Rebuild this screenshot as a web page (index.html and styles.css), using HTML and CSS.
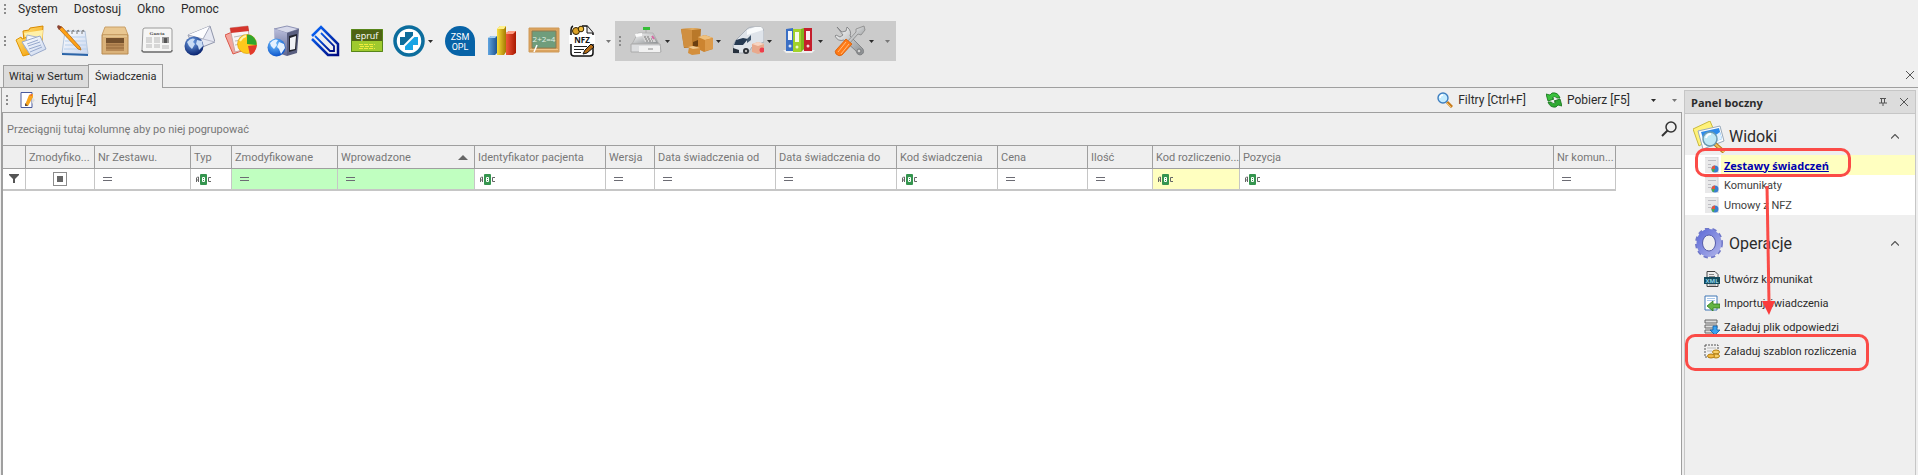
FILE: index.html
```html
<!DOCTYPE html>
<html lang="pl">
<head>
  <meta charset="UTF-8" />
  <meta name="viewport" content="width=device-width, initial-scale=1" />
  <title>Sertum - Świadczenia</title>
  <link rel="stylesheet" href="styles.css">
</head>
<body>
  <svg width="0" height="0" class="defs" aria-hidden="true">
    <defs>
      <linearGradient id="gOrange" x1="0" y1="0" x2="1" y2="1"><stop offset="0" stop-color="#ffe27a"/><stop offset="1" stop-color="#f39a00"/></linearGradient>
      <linearGradient id="gPaper" x1="0" y1="0" x2="1" y2="1"><stop offset="0" stop-color="#ffffff"/><stop offset="1" stop-color="#c9d6ee"/></linearGradient>
      <linearGradient id="gClip" x1="0" y1="0" x2="1" y2="1"><stop offset="0" stop-color="#0a6cff"/><stop offset="1" stop-color="#000a80"/></linearGradient>
      <linearGradient id="gServer" x1="0" y1="0" x2="0" y2="1"><stop offset="0" stop-color="#b9bddb"/><stop offset="1" stop-color="#5d6590"/></linearGradient>
      <radialGradient id="gGlobe" cx=".4" cy=".3" r=".7"><stop offset="0" stop-color="#6da0e6"/><stop offset="1" stop-color="#0a2470"/></radialGradient>
      <radialGradient id="gGlobe2" cx=".4" cy=".3" r=".7"><stop offset="0" stop-color="#74c4ff"/><stop offset="1" stop-color="#0c55cc"/></radialGradient>
      <linearGradient id="gBlueBar"><stop offset="0" stop-color="#5fa4e0"/><stop offset="1" stop-color="#1f5490"/></linearGradient>
      <linearGradient id="gYellowBar"><stop offset="0" stop-color="#f8dc3a"/><stop offset="1" stop-color="#a37a00"/></linearGradient>
      <linearGradient id="gRedBar"><stop offset="0" stop-color="#f0583a"/><stop offset="1" stop-color="#a81800"/></linearGradient>
      <linearGradient id="gSteel" x1="0" y1="0" x2="1" y2="1"><stop offset="0" stop-color="#ffffff"/><stop offset="1" stop-color="#85898c"/></linearGradient>
      <linearGradient id="gGear" x1="0" y1="0" x2="1" y2="1"><stop offset="0" stop-color="#6470d8"/><stop offset="1" stop-color="#a9aee8"/></linearGradient>
      <symbol id="abc" viewBox="0 0 16 12">
        <rect x="4" y="1" width="7" height="11" rx="1" fill="#35954f"/>
        <path d="M.5 9V5l1-1h1v5M.5 7h2" fill="none" stroke="#666"/>
        <path d="M6.500 4.500h2v4h-2zM6.500 6.500h2" fill="none" stroke="#fff"/>
        <path d="M15 4.500h-2.500v4H15" fill="none" stroke="#666"/>
      </symbol>
      <symbol id="eq" viewBox="0 0 10 6"><path d="M0 1.500h9M0 4.500h9" stroke="#6c6c74"/></symbol>
      <symbol id="report" viewBox="0 0 16 16">
        <path d="M1 0h13v16H1z" fill="#e9e9ea"/><path d="M1 0h13v16" fill="none" stroke="#d2d2d4"/>
        <path d="M4 3.500h8M4 7.500h3M4 10.500h3" stroke="#bdbdc2"/>
        <circle cx="11" cy="12" r="3.500" fill="#3a7fd0"/><path d="M11 12V8.500A3.500 3.500 0 0 0 7.500 12z" fill="#e2553a"/><path d="M11 12h-3.500a3.500 3.500 0 0 0 2 3.200z" fill="#4cab4c"/>
      </symbol>
      <symbol id="drop" viewBox="0 0 5 3"><path d="M0 0h5L2.500 3z" fill="currentColor"/></symbol>
    </defs>
  </svg>

  <nav class="menu">
    <span class="grip"></span>
    <button>System</button>
    <button>Dostosuj</button>
    <button>Okno</button>
    <button>Pomoc</button>
  </nav>

  <div class="toolbars">
    <div class="toolbar">
      <span class="grip"></span>
      <button class="tool" aria-label="Foldery">
        <svg viewBox="0 0 32 32">
          <path d="M8 6l6-1 1-2 13-2-1 19-17 5z" fill="url(#gOrange)" stroke="#d98a00"/>
          <path d="M9 8l19-3-1 15-12 4z" fill="#fff0a8"/>
          <path d="M1 15l5-3 1 2 8-3 4 17-11 3z" fill="url(#gOrange)" stroke="#e09400"/>
          <path d="M12 10l14 3-2 12-14-2z" fill="#f4f6fb" stroke="#a8b4cc"/>
          <path d="M7 17l18-6 6 13-15 7z" fill="url(#gPaper)" stroke="#9aaacb"/>
          <path d="M12 19l11-4M13 21l12-4M14 24l12-4M15 27l12-5" stroke="#97a9cd"/>
        </svg>
      </button>
      <button class="tool" aria-label="Notatnik">
        <svg viewBox="0 0 32 32">
          <path d="M8 6h20l3 23-26-1z" fill="url(#gPaper)" stroke="#b4c6de"/>
          <path d="M5 28l26 1v2L5 30z" fill="#2b64a8"/>
          <path d="M9 12h19M8 16h21M8 20h22M7 24h23" stroke="#b9d0ec"/>
          <path d="M10 9V6q2-2 2 1M15 9V6q2-2 2 1M20 9V6q2-2 2 1M25 9V6q2-2 2 1" fill="none" stroke="#777"/>
          <path d="M2 1l3 1 18 20 1 3-3-1L2 4z" fill="#ffa216" stroke="#b86a10" stroke-width=".8"/>
          <path d="M1 0l4 2-3 3-2-3z" fill="#8b4535"/>
        </svg>
      </button>
      <button class="tool" aria-label="Magazyn">
        <svg viewBox="0 0 32 32">
          <path d="M6 2h20l3 8H3z" fill="#e9c791" stroke="#c9a068"/>
          <path d="M3 10h26v19H3z" fill="#dab27a" stroke="#b98b50"/>
          <path d="M7 13h18v13H7z" fill="#74502c"/><path d="M7 18h18v8H7z" fill="#b88a56"/>
          <path d="M7 20h18M7 23h18" stroke="#94693a"/><path d="M4 11h24" stroke="#f1d8a8"/>
        </svg>
      </button>
      <button class="tool" aria-label="Aktualności">
        <svg viewBox="0 0 32 32">
          <path d="M2 4q1-1 2-1h25q2 0 2 2v20q0 2-2 2H3q-2 0-2-2z" fill="#f6f6f5" stroke="#9a9a9a"/>
          <path d="M1 25q0 2 2 2h26q2 0 2-2" fill="none" stroke="#777" stroke-width="1.500"/>
          <text x="16" y="10" text-anchor="middle" font-family="Liberation Serif, serif" font-weight="bold" font-size="5" fill="#444">Gazeta</text>
          <path d="M21 12h7v6h-7z" fill="#999"/><path d="M23 13h3v5h-3z" fill="#555"/>
          <path d="M5 13h6M5 15h6M5 17h6M5 20h6M5 22h6M13 13h6M13 15h6M13 17h6M13 20h6M13 22h6M21 21h7M21 23h7" stroke="#b6b6b6"/>
        </svg>
      </button>
      <button class="tool" aria-label="Poczta">
        <svg viewBox="0 0 32 32">
          <path d="M5 10l22-9 5 16-20 8z" fill="#e6e8f2" stroke="#8f95aa"/>
          <path d="M5 10l15 4 7-13" fill="#fdfdff" stroke="#a4a9bc"/><path d="M20 14l12 3" stroke="#b7bacb"/>
          <circle cx="11" cy="21" r="9.500" fill="url(#gGlobe)"/>
          <path d="M4 17q4-5 8-3l-2 3 2 2-3 5-3-3zM14 15l5 1 1 5-4 4-1-4-2-2z" fill="#c9dcf5"/>
        </svg>
      </button>
      <button class="tool" aria-label="Raporty">
        <svg viewBox="0 0 32 32">
          <path d="M0 10l14-6 8 20-14 5z" fill="#f4a69d" stroke="#d9574a"/>
          <path d="M5 3l18-2 2 22-15 4z" fill="#f7f4f4" stroke="#c9a5a2"/>
          <path d="M5 3l18-2 1 5L6 8z" fill="#d5352c"/><path d="M9 12l11-2M10 16l8-1M10 20l6-1" stroke="#b9b9b9"/>
          <circle cx="22" cy="19" r="9.500" fill="#ffc91c" stroke="#d79a00" stroke-width=".6"/>
          <path d="M22 19V9.500a9.500 9.500 0 0 1 9.500 10.500z" fill="#31a52c"/>
          <path d="M23 21l9-1q-1 8-7 10z" fill="#e23a2b"/><path d="M15 16q2-4 6-5" stroke="#fff3a6" stroke-width="2" fill="none"/>
        </svg>
      </button>
      <button class="tool" aria-label="Serwer">
        <svg viewBox="0 0 32 32">
          <path d="M7 4l13-3 12 3-12 4z" fill="#d7d9ea" stroke="#8d92b4"/>
          <path d="M7 4l13 4v23L8 27z" fill="url(#gServer)"/>
          <path d="M20 8l12-4-2 24-10 3z" fill="#5a5f80"/><path d="M22 11l8-2-1 16-7 2z" fill="#20222c"/><path d="M23 13l6-2-1 13-5 1z" fill="#f1f2f6"/>
          <circle cx="9.500" cy="22.500" r="9" fill="url(#gGlobe2)"/>
          <path d="M3 18q4-5 8-3l-2 3 1 2-3 4-3-3zM12 17l5 2 1 4-4 6-2-5-2-2z" fill="#e4f1ff"/>
        </svg>
      </button>
      <button class="tool" aria-label="Załączniki">
        <svg viewBox="0 0 32 32">
          <path d="M3 11l9-9 17 17v11H19L3 14" fill="none" stroke="url(#gClip)" stroke-width="2.500"/>
          <path d="M6 11l15 15h4v-5L12 8" fill="none" stroke="url(#gClip)" stroke-width="1.800"/>
        </svg>
      </button>
      <button class="tool" aria-label="epruf">
        <svg viewBox="0 0 32 32">
          <path d="M0 4h32v23H0z" fill="#9fca2e"/><path d="M1 5h30v11H1z" fill="#4f6313"/>
          <path d="M.5 4.500h31v22H.5z" fill="none" stroke="#57851a"/>
          <text x="16" y="14" text-anchor="middle" font-family="Open Sans, sans-serif" font-size="9" fill="#fff">epruf</text>
          <path d="M8 19.500h16M9 21.500h13M8 23.500h16" stroke="#f2ec3c" stroke-dasharray="4 1"/>
        </svg>
      </button>
      <button class="tool tool-drop" aria-label="Apteka">
        <svg viewBox="0 0 32 32">
          <circle cx="16" cy="16" r="14" fill="#fff" stroke="#0c6d9d" stroke-width="3.500"/>
          <path d="M12 7h8v5h5v8h-5v5h-8v-5H7v-8h5z" fill="#0e6c9a"/>
          <path d="M25 12v8h-5v5h-8v-4l9-9z" fill="#18a4e4"/><path d="M10 22L22 10" stroke="#fff" stroke-width="2"/>
        </svg>
        <svg class="drop"><use href="#drop"/></svg>
      </button>
      <button class="tool" aria-label="ZSM OPL">
        <svg viewBox="0 0 32 32">
          <path d="M16 1a15 15 0 0 1 15 15v15H16a15 15 0 0 1 0-30z" fill="#0763a7"/>
          <text x="16" y="15" text-anchor="middle" font-family="Roboto, sans-serif" font-size="9" fill="#fff">ZSM</text>
          <text x="16" y="25" text-anchor="middle" font-family="Roboto, sans-serif" font-size="9" fill="#fff">OPL</text>
        </svg>
      </button>
      <button class="tool" aria-label="Statystyki">
        <svg viewBox="0 0 32 32">
          <path d="M2 13l3-2h6v17l-2 2H2z" fill="url(#gBlueBar)"/><path d="M2 13l3-2h6l-2 2z" fill="#a4cdf0"/>
          <path d="M20 8l3-2h7v22l-3 2h-7z" fill="url(#gRedBar)"/><path d="M20 8l3-2h7l-3 3h-7z" fill="#ff9a80"/>
          <path d="M11 4l3-3h6v26l-2 3h-7z" fill="url(#gYellowBar)"/><path d="M11 4l3-3h6l-2 3z" fill="#fff08a"/>
        </svg>
      </button>
      <button class="tool" aria-label="Szkolenia">
        <svg viewBox="0 0 32 32">
          <path d="M1 3h30v24H1z" fill="#dba35e" stroke="#cf9a58"/><path d="M4 6h24v17H4z" fill="#6f9d7c" stroke="#8a7a51"/>
          <text x="16" y="17" text-anchor="middle" font-family="Open Sans, sans-serif" font-size="8" fill="#e2efe4">2+2=4</text>
          <path d="M2 24.500h28" stroke="#efc48a"/><path d="M6 27l3-7" stroke="#fff" stroke-width="1.500"/>
        </svg>
      </button>
      <button class="tool tool-narrow" aria-label="NFZ">
        <svg viewBox="0 0 32 32">
          <path d="M7 1q-2 1-2 4v23q0 3 3 3h16q3 0 3-3V8l-6-7h-5" fill="#fff" stroke="#111" stroke-width="1.500"/>
          <path d="M21 1v7h6" fill="#eee" stroke="#111"/>
          <path d="M3 10h26v9H3z" fill="#fff"/>
          <text x="16" y="18" text-anchor="middle" font-family="Open Sans, sans-serif" font-weight="bold" font-size="8" fill="#111">NFZ</text>
          <path d="M8 21.500h13M8 24.500h10M8 27.500h7" stroke="#222"/>
          <path d="M25 19l3 3-7 6-4 1 2-4z" fill="#b56d17" stroke="#111"/>
          <circle cx="10" cy="6" r="3.500" fill="#dca126" stroke="#332200"/><circle cx="15" cy="4" r="2.800" fill="#f0bd3b" stroke="#332200"/>
        </svg>
      </button>
      <button class="tool-more" aria-label="Więcej"><svg class="drop"><use href="#drop"/></svg></button>
    </div>

    <div class="toolbar toolbar-dark">
      <span class="grip"></span>
      <button class="tool tool-drop" aria-label="Kasa">
        <svg viewBox="0 0 32 32">
          <path d="M13 2h7v3h-7z" fill="#35bd37"/><path d="M16 5v5" stroke="#aaa"/>
          <path d="M8 8h15l6 11H2z" fill="url(#gSteel)" stroke="#b2b2b2"/><path d="M5 9l7-1v3l-6 1z" fill="#fafafa"/>
          <path d="M12 11l10-1 4 7H15z" fill="#d6d6d6"/><path d="M14 12h6M15 14h7M16 16h7" stroke="#777" stroke-dasharray="2 1"/><path d="M22 11l2 3" stroke="#d76aa4" stroke-width="2"/>
          <path d="M1 19h29l1 8H1z" fill="#dcdddf" stroke="#aaa"/><path d="M9 21h21v6H9z" fill="#f1f1f1"/><path d="M18 24h5" stroke="#888"/>
        </svg>
        <svg class="drop"><use href="#drop"/></svg>
      </button>
      <button class="tool tool-drop" aria-label="Paczki">
        <svg viewBox="0 0 32 32">
          <path d="M0 4l12-1 8 1-1 18-16 1z" fill="#b97829"/><path d="M0 4l11 1 9-1-8-1z" fill="#e4af66"/><path d="M0 4l11 1v18l-8-1z" fill="#d08f40"/><path d="M12 17l5-2v6l-5 1z" fill="#6b3f10"/>
          <path d="M17 12l7-2 8 3v11l-9 3-6-3z" fill="#cc8430"/><path d="M17 12l7-2 8 3-8 2z" fill="#efc17e"/><path d="M24 15l8-2v11l-8 2z" fill="#dc9a4a"/>
          <path d="M8 22l3-1 8 2v6l-8 1-4-2z" fill="#d48f3c"/><path d="M7 22l5-1 7 2-7 1z" fill="#f0c88d"/>
        </svg>
        <svg class="drop"><use href="#drop"/></svg>
      </button>
      <button class="tool tool-drop" aria-label="Dostawy">
        <svg viewBox="0 0 32 32">
          <path d="M1 20l3-5L15 4q2-2 5-2h8q3 0 4 4v11l-12 5-4 6H2z" fill="#dfe4ea" stroke="#aab0b8"/>
          <path d="M15 5l8-3h6q2 1 2 3l-16 5z" fill="#f9fbfc"/>
          <path d="M4 15l7-2 5 1-5 6H2z" fill="#263a52"/><path d="M15 14l4-4v5l-4 3z" fill="#40566d"/>
          <path d="M1 23l6 2v3H1z" fill="#27313d"/><circle cx="14" cy="26" r="3" fill="#2a2e34"/><circle cx="14" cy="26" r="1.200" fill="#bbb"/>
          <path d="M20 19l6-2 6 2v8l-6 2-6-2z" fill="#e8a98c"/><path d="M20 19l6-2 6 2-6 2z" fill="#f7d5c2"/>
          <circle cx="30" cy="25" r="2.500" fill="#ee3d4d"/>
        </svg>
        <svg class="drop"><use href="#drop"/></svg>
      </button>
      <button class="tool tool-drop" aria-label="Segregatory">
        <svg viewBox="0 0 32 32">
          <path d="M0 25h32l-3 3H3z" fill="#eee"/>
          <path d="M3 4l7-1v23H3z" fill="#3b6fc4"/><path d="M5 6h4v9H5z" fill="#f3f5fb"/><circle cx="7" cy="21" r="1.500" fill="#dce5f7"/>
          <path d="M21 3h8v23h-8z" fill="#c41e2c"/><path d="M23 6h4v9h-4z" fill="#fbeeee"/><circle cx="25" cy="21" r="1.500" fill="#f6d5d7"/>
          <path d="M10 4l8 0 3-1v21l-3 3h-8z" fill="#7fb51b"/><path d="M10 4h8v23h-8z" fill="#a2d22a"/><path d="M12 7h4v10h-4z" fill="#f7fbe9"/><circle cx="14" cy="22" r="1.500" fill="#eef8cf"/>
        </svg>
        <svg class="drop"><use href="#drop"/></svg>
      </button>
      <button class="tool tool-drop" aria-label="Narzędzia">
        <svg viewBox="0 0 32 32">
          <path d="M3 2l5 5 4-1 1-4q5 4 3 9l13 13q2 5-3 6-3 0-4-4L10 15q-6 2-9-4l1-1 4 2 3-2z" fill="url(#gSteel)" stroke="#77797b" stroke-width=".8"/>
          <circle cx="25" cy="26" r="2" fill="#d4d4d4" stroke="#77797b"/>
          <path d="M30 1l1 4-4 5-3-1-9 10-2-2 9-10v-3z" fill="url(#gSteel)" stroke="#888" stroke-width=".8"/>
          <path d="M12 14l6 5-10 11q-3 2-6-1-2-3 1-5z" fill="#ff7a16" stroke="#d95a00" stroke-width=".8"/><path d="M12 17L4 27M15 19L7 29" stroke="#ffbd80"/>
        </svg>
        <svg class="drop"><use href="#drop"/></svg>
      </button>
      <button class="tool-more" aria-label="Więcej"><svg class="drop"><use href="#drop"/></svg></button>
    </div>
  </div>

  <div class="tabs">
    <button class="tab">Witaj w Sertum</button>
    <button class="tab tab-active">Świadczenia</button>
    <button class="close" aria-label="Zamknij"><svg viewBox="0 0 8 8"><path d="M0 0l8 8M8 0L0 8" stroke="#555"/></svg></button>
  </div>

  <div class="workspace">
    <main>
      <div class="actions">
        <span class="grip"></span>
        <button class="action">
          <svg viewBox="0 0 16 16"><path d="M1 .5h11v15H1z" fill="#fff" stroke="#4a5a9c"/><path d="M12 5l3 3-3 4z" fill="#ddd"/><path d="M5 13l4-10 4-1v3L8 14H5z" fill="#f9a51c"/><path d="M5 11v3h3z" fill="#5d4c44"/><path d="M9 3l3-1v2z" fill="#e65f3c"/></svg>
          Edytuj [F4]
        </button>
        <span class="spacer"></span>
        <button class="action">
          <svg viewBox="0 0 16 16"><path d="M10 10l5 5" stroke="#c77a1c" stroke-width="3"/><path d="M9 10l5 5" stroke="#f7c565"/><circle cx="6" cy="6" r="5" fill="#c5ecff" stroke="#3f7fc0" stroke-width="1.400"/><path d="M3 6q0-3 3-3" stroke="#fff" stroke-width="1.500" fill="none"/></svg>
          Filtry [Ctrl+F]
        </button>
        <button class="action">
          <svg viewBox="0 0 16 16"><path d="M14 6Q12 0 6 1L4 3 0 2l2 7 6-2-2-1q3-3 5 0z" fill="#39c13c" stroke="#126e18" stroke-width=".8"/><path d="M2 10q2 6 8 5l2-2 4 1-2-7-6 2 2 1q-3 3-5 0z" fill="#2faa32" stroke="#126e18" stroke-width=".8"/></svg>
          Pobierz [F5]
        </button>
        <button class="action-drop action-menu" aria-label="Opcje pobierania"><svg class="drop"><use href="#drop"/></svg></button>
        <button class="action-drop muted" aria-label="Więcej"><svg class="drop"><use href="#drop"/></svg></button>
      </div>

      <div class="grid">
        <div class="group-panel">
          <span>Przeciągnij tutaj kolumnę aby po niej pogrupować</span>
          <button class="search" aria-label="Szukaj"><svg viewBox="0 0 16 16"><circle cx="10" cy="6" r="5" fill="none" stroke="#333" stroke-width="1.500"/><path d="M6.500 9.500L1 15" stroke="#333" stroke-width="2"/></svg></button>
        </div>
        <table>
          <colgroup>
            <col class="c-mark"><col class="c-mod"><col class="c-nr"><col class="c-typ"><col class="c-modified"><col class="c-added"><col class="c-patient"><col class="c-version"><col class="c-from"><col class="c-to"><col class="c-code"><col class="c-price"><col class="c-qty"><col class="c-settle"><col class="c-item"><col class="c-msg"><col>
          </colgroup>
          <thead>
            <tr>
              <th></th>
              <th>Zmodyfiko...</th>
              <th>Nr Zestawu.</th>
              <th>Typ</th>
              <th>Zmodyfikowane</th>
              <th><span class="sorted">Wprowadzone <svg viewBox="0 0 10 5"><path d="M0 5l5-5 5 5z" fill="#666"/></svg></span></th>
              <th>Identyfikator pacjenta</th>
              <th>Wersja</th>
              <th>Data świadczenia od</th>
              <th>Data świadczenia do</th>
              <th>Kod świadczenia</th>
              <th>Cena</th>
              <th>Ilość</th>
              <th>Kod rozliczenio...</th>
              <th>Pozycja</th>
              <th>Nr komun...</th>
              <th></th>
            </tr>
          </thead>
          <tbody>
            <tr>
              <td class="mark"><svg class="funnel" viewBox="0 0 10 10"><path d="M0 0h10v1L6 5v4H4V5L0 1z" fill="#555"/></svg></td>
              <td class="check"><input type="checkbox" aria-label="Zmodyfikowany"></td>
              <td><svg class="eq"><use href="#eq"/></svg></td>
              <td><svg class="abc"><use href="#abc"/></svg></td>
              <td class="green"><svg class="eq"><use href="#eq"/></svg></td>
              <td class="green"><svg class="eq"><use href="#eq"/></svg></td>
              <td><svg class="abc"><use href="#abc"/></svg></td>
              <td><svg class="eq"><use href="#eq"/></svg></td>
              <td><svg class="eq"><use href="#eq"/></svg></td>
              <td><svg class="eq"><use href="#eq"/></svg></td>
              <td><svg class="abc"><use href="#abc"/></svg></td>
              <td><svg class="eq"><use href="#eq"/></svg></td>
              <td><svg class="eq"><use href="#eq"/></svg></td>
              <td class="yellow"><svg class="abc"><use href="#abc"/></svg></td>
              <td><svg class="abc"><use href="#abc"/></svg></td>
              <td><svg class="eq"><use href="#eq"/></svg></td>
              <td class="rest"></td>
            </tr>
          </tbody>
        </table>
      </div>
    </main>

    <aside>
      <div class="panel-title">
        <h2>Panel boczny</h2>
        <button aria-label="Przypnij"><svg viewBox="0 0 8 8"><path d="M1 .5h6M2.500 0v5M5.500 0v5M0 5h8M4 5v3" stroke="#555" fill="none"/></svg></button>
        <button aria-label="Zamknij panel"><svg viewBox="0 0 8 8"><path d="M0 0l8 8M8 0L0 8" stroke="#555"/></svg></button>
      </div>

      <section>
        <h3 class="heading-views">
          <svg class="big" viewBox="0 0 32 32">
            <path d="M0 8L17 0l6 14-17 11z" fill="#fff27a" stroke="#c9b93c"/>
            <path d="M5 10l22-5 4 15-21 8z" fill="#fdfdfd" stroke="#9ab"/><path d="M8 11l18-4 3 11-17 6z" fill="#2d8bea"/><path d="M10 17l6-3 4 2 7-5 2 7-16 6z" fill="#dff1ff"/>
            <path d="M22 23l9 8" stroke="#b57513" stroke-width="4"/><path d="M22 23l9 8" stroke="#f0c060" stroke-width="2"/>
            <circle cx="17" cy="18" r="7" fill="#bfe8f5" stroke="#6b9ab0" stroke-width="1.500"/><path d="M13 17q1-4 5-4" stroke="#fff" stroke-width="2" fill="none"/>
          </svg>
          Widoki
          <svg class="chevron" viewBox="0 0 8 5"><path d="M0 4.500l4-4 4 4" fill="none" stroke="#555" stroke-width="1.200"/></svg>
        </h3>
        <ul class="views">
          <li class="current"><svg class="small"><use href="#report"/></svg><a href="#zestawy">Zestawy świadczeń</a></li>
          <li><svg class="small"><use href="#report"/></svg><a href="#komunikaty">Komunikaty</a></li>
          <li><svg class="small"><use href="#report"/></svg><a href="#umowy">Umowy z NFZ</a></li>
        </ul>
      </section>

      <section>
        <h3>
          <svg class="big" viewBox="0 0 32 32">
            <ellipse cx="16" cy="15" rx="12" ry="13.500" fill="none" stroke="#7078c8" stroke-width="4" stroke-dasharray="4 3"/>
            <ellipse cx="16" cy="15" rx="9.500" ry="11" fill="none" stroke="url(#gGear)" stroke-width="6"/>
            <ellipse cx="16" cy="15" rx="6.500" ry="8" fill="none" stroke="#555ba8"/>
          </svg>
          Operacje
          <svg class="chevron" viewBox="0 0 8 5"><path d="M0 4.500l4-4 4 4" fill="none" stroke="#555" stroke-width="1.200"/></svg>
        </h3>
        <ul class="operations">
          <li><svg class="small" viewBox="0 0 16 16"><path d="M3 .5h8l3 3v12H3z" fill="#eee" stroke="#444"/><path d="M5 3.500h5M5 5.500h6M5 14h7" stroke="#888"/><path d="M0 6h16v7H0z" fill="#134a5c"/><text x="8" y="12" text-anchor="middle" font-family="Open Sans, sans-serif" font-weight="bold" font-size="6" fill="#8fd6ea">XML</text></svg><a href="#utworz">Utwórz komunikat</a></li>
          <li><svg class="small" viewBox="0 0 16 16"><path d="M1 1h12v14H1z" fill="#fff" stroke="#3f76b5"/><path d="M3 3.500h8M3 5.500h8" stroke="#a9c8ea"/><path d="M16 9v4H9v3l-6-5 6-5v3z" fill="#64b443" stroke="#2f7a1c" stroke-width=".8"/></svg><a href="#importuj">Importuj świadczenia</a></li>
          <li><svg class="small" viewBox="0 0 16 16"><path d="M1 1h12v3H1zM1 6h12v3H1zM1 11h9v3H1z" fill="#ddd" stroke="#666"/><path d="M9 7h4v4h3l-5 5-5-5h3z" fill="#39a3f0" stroke="#0c5ea9" stroke-width=".8"/></svg><a href="#plik">Załaduj plik odpowiedzi</a></li>
          <li><svg class="small" viewBox="0 0 16 16"><path d="M1 2h13v12H1z" fill="#f1f1f1" stroke="#555" stroke-dasharray="2 1"/><path d="M3 5h9M3 8h5" stroke="#bbb"/><ellipse cx="12" cy="9" rx="3.500" ry="2" fill="#f8cf66" stroke="#b17d12"/><ellipse cx="12" cy="13" rx="3.500" ry="2" fill="#f8cf66" stroke="#b17d12"/><ellipse cx="7" cy="13" rx="3.500" ry="2" fill="#f3b843" stroke="#b17d12"/></svg><a href="#szablon">Załaduj szablon rozliczenia</a></li>
        </ul>
      </section>

      <!-- instruction marks over the panel -->
      <div class="highlight highlight-view"></div>
      <div class="highlight highlight-operation"></div>
      <svg class="arrow" viewBox="0 0 14 130"><path d="M6 0l2 116" stroke="#fb4b47" stroke-width="3"/><path d="M1 115h13l-6 14z" fill="#fb3c3c"/></svg>
    </aside>
  </div>
</body>
</html>
```

FILE: styles.css
```css
* {
  box-sizing: border-box;
}
body {
  margin: 0;
  min-height: 100vh;
  display: flex;
  flex-direction: column;
  background-color: #efefef;
  color: #2b2b2b;
  font-family: Roboto, Tahoma, sans-serif;
  font-size: 11px;
}
.defs {
  position: absolute;
}
button {
  margin: 0;
  padding: 0;
  border: none;
  background: none;
  color: inherit;
  font: inherit;
  cursor: pointer;
}
svg {
  display: block;
  flex: none;
}
.grip {
  width: 2px;
  height: 10px;
  background: repeating-linear-gradient(#8c8c8c 0 2px, transparent 2px 4px);
}
.drop {
  width: 5px;
  height: 3px;
}

/* menu */
.menu {
  display: flex;
  align-items: center;
  gap: 16px;
  height: 18px;
  padding-left: 4px;
  font-size: 12px;
}
.menu .grip {
  margin-right: -4px;
}

/* toolbars */
.toolbars {
  display: flex;
  align-items: center;
  height: 46px;
}
.toolbar {
  display: flex;
  align-items: center;
  height: 40px;
  padding-left: 4px;
}
.toolbar .grip {
  margin-right: 5px;
}
.toolbar-dark {
  padding-right: 2px;
  background-color: #cbcbcb;
}
.tool {
  display: flex;
  align-items: center;
  width: 42px;
  height: 40px;
  padding-left: 4px;
}
.tool > svg:first-child {
  width: 32px;
  height: 32px;
}
.tool-drop {
  width: 51px;
  gap: 3px;
}
.tool-narrow {
  width: 36px;
  padding-left: 0;
}
.tool-more {
  padding: 0 4px;
  color: #777;
}

/* tabs */
.tabs {
  display: flex;
  align-items: flex-end;
  height: 24px;
  padding-left: 3px;
  border-bottom: 1px solid #9f9f9f;
}
.tab {
  height: 22px;
  padding: 0 5px;
  border: 1px solid #9f9f9f;
  border-bottom: none;
  background-color: #dcdcdc;
}
.tab-active {
  height: 24px;
  margin: 0 0 -1px -1px;
  padding: 0 6px;
  background-color: #efefef;
}
.close {
  margin: 0 4px 8px auto;
}
.close svg,
.panel-title svg {
  width: 8px;
  height: 8px;
}

/* workspace */
.workspace {
  flex: 1;
  display: flex;
}
main {
  flex: 1;
  min-width: 0;
  display: flex;
  flex-direction: column;
  margin-left: 1px;
  border-left: 1px solid #9f9f9f;
}
.actions {
  display: flex;
  align-items: center;
  height: 24px;
  padding-left: 4px;
  font-size: 12px;
}
.action {
  display: flex;
  align-items: center;
  gap: 5px;
  margin-left: 12px;
}
.action + .action {
  margin-left: 20px;
}
.action svg {
  width: 16px;
  height: 16px;
}
.spacer {
  flex: 1;
}
.action-drop {
  margin-left: 16px;
}
.action-menu {
  margin-left: 21px;
}
.muted {
  margin-right: 7px;
  color: #777;
}
.grid {
  flex: 1;
  margin-right: 2px;
  border: 1px solid #9f9f9f;
  border-bottom: none;
  background-color: #fff;
  color: #777;
}
.group-panel {
  display: flex;
  align-items: center;
  justify-content: space-between;
  height: 32px;
  padding: 0 4px;
  background-color: #efefef;
}
.search svg {
  width: 16px;
  height: 16px;
}

/* services table */
table {
  width: 100%;
  table-layout: fixed;
  border-collapse: separate;
  border-spacing: 0;
}
th {
  height: 24px;
  padding: 0 0 0 3px;
  border: solid #9f9f9f;
  border-width: 1px 1px 1px 0;
  background-color: #efefef;
  font-weight: normal;
  text-align: left;
  white-space: nowrap;
}
th:last-child {
  border-right: none;
}
td {
  height: 22px;
  padding: 0 5px;
  border: solid #c6c6c6;
  border-width: 0 1px 2px 0;
}
.sorted {
  display: flex;
  align-items: center;
  justify-content: space-between;
  padding-right: 6px;
}
.sorted svg {
  width: 10px;
  height: 5px;
}
.green {
  background-color: #c0ffc0;
}
.yellow {
  background-color: #ffffc0;
}
.rest {
  border: none;
}
.mark {
  padding-left: 6px;
}
.funnel {
  width: 10px;
  height: 10px;
}
.check input {
  appearance: none;
  display: block;
  width: 14px;
  height: 14px;
  margin: 0 auto;
  border: 1px solid #8c8c8c;
  background: #666 content-box;
  padding: 3px;
}
.eq {
  width: 10px;
  height: 6px;
  margin-left: 3px;
}
.abc {
  width: 16px;
  height: 12px;
}
.c-mark { width: 23px; }
.c-mod { width: 69px; }
.c-nr { width: 96px; }
.c-typ { width: 41px; }
.c-modified { width: 106px; }
.c-added { width: 137px; }
.c-patient { width: 131px; }
.c-version { width: 49px; }
.c-from { width: 121px; }
.c-to { width: 121px; }
.c-code { width: 101px; }
.c-price { width: 90px; }
.c-qty { width: 65px; }
.c-settle { width: 87px; }
.c-item { width: 314px; }
.c-msg { width: 62px; }

/* side panel */
aside {
  position: relative;
  width: 232px;
  margin: 2px 2px 0 0;
  border: 1px solid #c6c6c6;
  border-bottom: none;
}
.panel-title {
  display: flex;
  align-items: center;
  gap: 13px;
  height: 23px;
  padding: 0 7px 0 6px;
  border-bottom: 1px solid #c6c6c6;
  background-color: #dcdcdc;
}
h2 {
  flex: 1;
  margin: 0;
  font-family: "Open Sans", Tahoma, sans-serif;
  font-size: 11px;
}
h3 {
  display: flex;
  align-items: center;
  gap: 4px;
  height: 41px;
  margin: 0;
  padding: 0 16px 0 8px;
  font-size: 16px;
  font-weight: normal;
}
.heading-views {
  padding-top: 4px;
}
.big {
  width: 32px;
  height: 32px;
}
.chevron {
  width: 8px;
  height: 5px;
  margin-left: auto;
}
ul {
  margin: 0;
  padding: 0;
  list-style: none;
}
a {
  color: #404040;
  text-decoration: none;
}
li {
  display: flex;
  align-items: center;
  gap: 4px;
  height: 20px;
  padding-left: 19px;
}
.views {
  margin-bottom: 8px;
  background-color: #fff;
}
.current {
  background: linear-gradient(to right, #fff 36px, #ffffc0 36px);
}
.current a {
  color: #0000b0;
  font-family: "Open Sans", Tahoma, sans-serif;
  font-weight: bold;
  text-decoration: underline;
}
.operations {
  padding-top: 3px;
}
.operations li {
  height: 24px;
}
.operations a {
  color: #2b2b2b;
}
.small {
  width: 16px;
  height: 16px;
}

/* marks */
.highlight {
  position: absolute;
  border: 3px solid #fb4b47;
  border-radius: 10px;
}
.highlight-view {
  top: 57px;
  left: 10px;
  width: 156px;
  height: 29px;
}
.highlight-operation {
  top: 243px;
  left: 0;
  width: 184px;
  height: 37px;
}
.arrow {
  position: absolute;
  top: 95px;
  left: 76px;
  width: 14px;
  height: 130px;
}
```
